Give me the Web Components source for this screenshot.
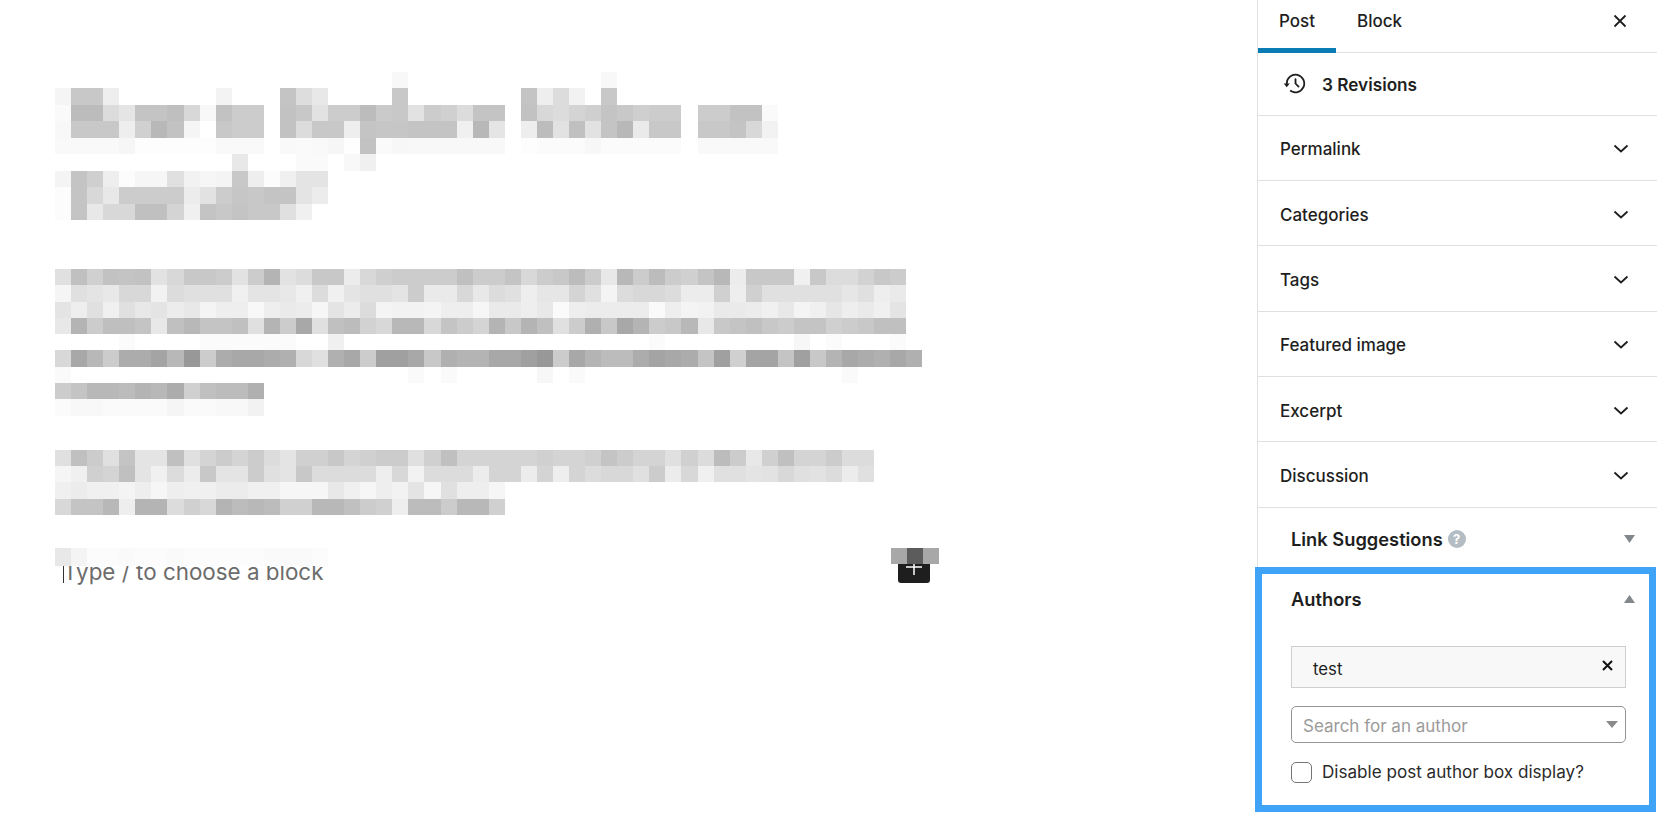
<!DOCTYPE html>
<html>
<head>
<meta charset="utf-8">
<style>
  html, body { margin: 0; padding: 0; background: #fff; height: 100%; overflow: hidden; }
  body { font-family: Inter, "Liberation Sans", sans-serif; color: #1e1e1e; }
</style>
</head>
<body>
<editor-page>
  <editor-canvas slot="canvas">
    <pixel-block id="title" cell-height="16.45" rows="
      ff ff ff ff ff ff ff ff ff ff ff ff ff ff ff ff ff ff ff ff ff f8 ff ff ff ff ff ff ff ff ff ff ff ff f8
      f5 c8 c8 ee ff ff ff ff ff ff f3 ff ff ff c4 dd e8 ff ff ff ff c8 ff ff ff ff ff ff ff c4 ee dc f2 ff c8
      fa bc bc dc e5 c4 c4 bf d8 f8 c2 cc cc ff c2 c8 e2 cc cc bc ca c8 e2 cc d0 dc c4 c4 ff c2 d8 dc d4 cf c4 c8 cf cc cc ff cc cc c2 c2 fa
      f8 c8 c8 c8 ee d0 b8 c2 f5 ff c8 cc cc ff c2 dc c8 c8 ee c4 c6 c6 c4 c4 c4 f0 b8 e5 ff ee bc e2 c0 e2 c4 b8 ea c8 c8 ff c8 c8 c4 d8 f2
      f9 f9 f9 f9 f6 fd fd fd fd fd f9 f9 f9 ff f9 fa f9 f6 fe c2 fa f7 f8 f8 f8 f8 f8 f8 ff fd fb fb fb f7 fb fb fb fb fb ff f9 f9 f9 f9 f9
      ff ff ff ff ff ff ff ff ff ff ff e8 ff ff ff fa fa ff f8 f0
      f4 c4 cf ee fc f6 f6 e0 f2 f6 f4 c8 ee fc f0 e4 e4
      fc c4 d8 e8 cc cc cc cc ec e2 cc c6 c8 c4 c4 e4 ec
      fc c4 e8 d8 d8 c0 c0 d4 f0 c4 c8 c4 c8 c8 e0 f0
    "></pixel-block>
    <pixel-block id="para-one" cell-height="16.3" rows="
      e0 c0 d0 c2 c4 c2 e2 d8 c8 c8 cc e2 cc b4 e2 dc c8 c8 ec d8 cf cc cc cc cc c0 cc cc c4 d8 cc c8 bc cc e8 b8 cc bc cc d0 c4 b8 ec c8 c8 c8 f0 c8 dc dc d2 c8 cc
      f5 e0 e4 e8 d8 d8 f2 dc e0 e0 e0 f0 e4 e4 e8 f0 dc f0 e4 e0 e0 e4 cc ea ea d8 e8 dc e0 ee e6 e6 d4 e0 f4 dc d8 d8 dc ec ec d0 ee d0 e0 e0 e0 e0 e0 e6 e0 ee ea
      e4 ee e0 f0 e0 e8 e4 ec e8 f4 ee ee f8 ee ea ec f6 e4 ec dc f4 f2 f2 f4 ee ee f6 ea ea ee e8 fa ee ec ec ec ec fa ee f4 f2 ea ea ec f0 e8 f4 f0 e6 ee ea f0 e4
      e8 b4 cc bf bf c4 e8 c0 b8 c4 c4 c0 e0 b4 cc a8 e0 c0 bc d2 d8 b8 b8 d8 c4 cc d4 b4 c8 b4 c0 e0 cc b0 c8 a8 b4 cc c8 b8 e8 c8 c4 c0 c8 cc c4 c4 d0 cc c8 c0 c0
      ff ff ff ff fb ff ff ff ff fb fb fb fb fb fb ff ff f0 ff ff ff ff ff ff ff ff ff ff ff ff ff ff ff ff ff ff ff fb ff ff ff ff ff ff ff ff f7 ff fb ff ff ff fb
      d8 a8 b8 cc ac ac a4 b8 98 cc ac a8 a8 ac b0 d8 e0 b0 a8 cc a0 a0 a8 c8 b0 b4 b4 a8 a8 a0 98 cc a8 b4 bc bc ac a4 a8 ac c4 a0 d0 a4 a4 c4 a0 c8 b4 a8 ac b0 a8 b0
      fa ff ff ff ff ff ff ff ff ff ff ff ff ff ff ff ff ff ff ff ff ff fa ff fa ff ff ff ff ff f7 ff fa ff ff ff ff ff ff ff ff ff ff ff ff ff ff ff ff fa
      cc c4 b8 b8 bc b4 b8 ac d0 c0 bc bc b0
      fb f8 f8 fa fa fa fa f5 fa fa f8 f8 f2
    "></pixel-block>
    <pixel-block id="para-two" cell-height="16.4" rows="
      e0 c0 cc e0 c4 e4 e4 c0 e0 d4 cc d4 cc dc e4 d0 d0 c8 d4 d0 cc cc e0 d0 c0 d4 d4 d4 d4 d4 d0 d4 d4 d0 c4 cc d4 d4 e0 d0 dc bc cc e8 d0 c0 d4 d4 cc dc dc
      f5 f0 d0 d4 c0 e4 f0 dc ec c8 e4 e4 cc e0 e4 c8 dc dc dc dc ee d8 f2 dc dc dc ec d4 d4 ec d4 ee d4 dc d8 d8 e0 cc ec d8 f0 e0 e0 e4 e2 d8 e0 e2 dc ec e0
      f0 ec f0 f0 f4 ee f6 ee f0 f0 ec ec f0 f0 f6 f6 f6 e8 f0 f6 ee f2 e4 f6 e0 ee ee f6
      d8 c4 c4 b8 ee b4 b4 dc d0 d8 b4 bc b8 bc d0 d0 b8 b8 c0 cc d0 ee bc bc cc b8 b8 d0
    "></pixel-block>
    <type-line>Type / to choose a block</type-line>
  </editor-canvas>

  <editor-sidebar slot="sidebar">
    <sidebar-tabs></sidebar-tabs>
    <revisions-row>3 Revisions</revisions-row>
    <panel-row>Permalink</panel-row>
    <panel-row>Categories</panel-row>
    <panel-row>Tags</panel-row>
    <panel-row>Featured image</panel-row>
    <panel-row>Excerpt</panel-row>
    <panel-row>Discussion</panel-row>
    <meta-box-header help>Link Suggestions</meta-box-header>
    <authors-box></authors-box>
  </editor-sidebar>
</editor-page>

<script>
class EditorPage extends HTMLElement {
  constructor() {
    super();
    this.attachShadow({ mode: 'open' });
    this.shadowRoot.innerHTML = `
      <style>
        :host { display: flex; width: 1657px; height: 813px; overflow: hidden; background: #fff; }
        .canvas { flex: 0 0 1257px; min-width: 0; }
        .sidebar { flex: 0 0 400px; }
      </style>
      <div class="canvas"><slot name="canvas"></slot></div>
      <div class="sidebar"><slot name="sidebar"></slot></div>`;
  }
}

class EditorCanvas extends HTMLElement {
  constructor() {
    super();
    this.attachShadow({ mode: 'open' });
    this.shadowRoot.innerHTML = `
      <style>
        :host { display: block; padding: 72px 0 0 55px; }
        ::slotted(#para-one) { margin-top: 49px; }
        ::slotted(#para-two) { margin-top: 34px; }
        ::slotted(type-line) { margin-top: 33px; }
      </style>
      <slot></slot>`;
  }
}

// blurred-out text: each row in the attribute is a list of grey levels
class PixelBlock extends HTMLElement {
  constructor() {
    super();
    this.attachShadow({ mode: 'open' });
  }

  connectedCallback() {
    const h = this.getAttribute('cell-height') || '16.4';
    const rows = this.getAttribute('rows').trim().split('\n').map(r => r.trim().split(/\s+/));
    const html = rows.map(row =>
      `<div class="row">${row.map(v => `<i style="background:#${v}${v}${v}"></i>`).join('')}</div>`
    ).join('');
    this.shadowRoot.innerHTML = `
      <style>
        :host { display: block; }
        .row { display: flex; height: ${h}px; }
        i { display: block; flex: 0 0 16.07px; height: 100%; }
      </style>
      ${html}`;
  }
}

class TypeLine extends HTMLElement {
  constructor() {
    super();
    this.attachShadow({ mode: 'open' });
    const greys = ['e8','f4','fc','fc','fa','fc','fc','fa','fc','fc','fc','fc','fc','fa','fa','fa','fc'];
    this.shadowRoot.innerHTML = `
      <style>
        :host { display: flex; position: relative; height: 36px; width: 884px; align-items: flex-start; }
        .text {
          display: flex; flex: 1; align-items: center; height: 36px; padding-left: 8px; padding-top: 10px; box-sizing: border-box;
          font-size: 22.4px; color: #6c6c6c;
        }
        .caret { position: absolute; left: 8px; top: 16px; width: 1px; height: 19px; background: #333; }
        .add {
          display: flex; align-items: center; justify-content: center;
          width: 32px; height: 32px; margin: 3px 9px 0 0; background: #1e1e1e; border-radius: 3px;
        }
        .veil { position: absolute; left: 0; top: 0; display: flex; height: 18px; }
        .veil i { display: block; width: 16.07px; }
        .veil.btn { left: 836px; height: 16px; }
        .veil.btn i { width: 16px; }
      </style>
      <div class="text"><slot></slot></div>
      <div class="caret"></div>
      <div class="add">
        <svg width="16" height="16" viewBox="0 0 16 16"><path d="M8 0v16M0 8h16" stroke="#fff" stroke-width="1.5" fill="none"/></svg>
      </div>
      <div class="veil">${greys.map(v => `<i style="background:#${v}${v}${v}"></i>`).join('')}</div>
      <div class="veil btn"><i style="background:#a8a8a8"></i><i style="background:#5c5c5c"></i><i style="background:#a8a8a8"></i></div>`;
  }
}

class EditorSidebar extends HTMLElement {
  constructor() {
    super();
    this.attachShadow({ mode: 'open' });
    this.shadowRoot.innerHTML = `
      <style>
        :host { display: block; height: 813px; border-left: 1px solid #e0e0e0; box-sizing: border-box; }
      </style>
      <slot></slot>`;
  }
}

class SidebarTabs extends HTMLElement {
  constructor() {
    super();
    this.attachShadow({ mode: 'open' });
    this.shadowRoot.innerHTML = `
      <style>
        :host {
          display: flex; align-items: flex-start; height: 52.5px; box-sizing: border-box;
          border-bottom: 1px solid #e0e0e0; font-size: 17px; font-weight: 500;
        }
        .tab { display: flex; align-items: center; justify-content: center; height: 42px; }
        .post { width: 78px; box-sizing: border-box; border-bottom: 5.5px solid #0a7cb4; height: 52.5px; padding-bottom: 5px; }
        .block { margin-left: 21px; }
        .close { margin-left: auto; margin-right: 30px; height: 42px; display: flex; align-items: center; }
      </style>
      <div class="tab post">Post</div>
      <div class="tab block">Block</div>
      <div class="close">
        <svg width="14" height="14" viewBox="0 0 14 14"><path d="M1.5 1.5l11 11M12.5 1.5l-11 11" stroke="#1e1e1e" stroke-width="1.8" fill="none"/></svg>
      </div>`;
  }
}

class RevisionsRow extends HTMLElement {
  constructor() {
    super();
    this.attachShadow({ mode: 'open' });
    this.shadowRoot.innerHTML = `
      <style>
        :host {
          display: flex; align-items: center; height: 63px; box-sizing: border-box;
          border-bottom: 1px solid #e0e0e0; padding-left: 23px; font-size: 17.2px; font-weight: 600;
        }
        svg { margin-right: 12px; }
        span { padding-top: 1px; }
      </style>
      <svg width="29" height="29" viewBox="0 0 24 24" fill="#1e1e1e"><path d="M5.5 12h1.75l-2.5 3-2.5-3H4a8 8 0 113.134 6.35l.907-1.194A6.5 6.5 0 105.5 12zm9.53 1.97l-2.28-2.28V8.5a.75.75 0 00-1.5 0V12.3l2.72 2.72a.75.75 0 001.06-1.06z"/></svg>
      <span><slot></slot></span>`;
  }
}

class PanelRow extends HTMLElement {
  constructor() {
    super();
    this.attachShadow({ mode: 'open' });
    this.shadowRoot.innerHTML = `
      <style>
        :host {
          display: flex; align-items: center; justify-content: space-between; height: 65.4px; box-sizing: border-box;
          border-bottom: 1px solid #e0e0e0; padding: 3px 28px 0 22px; font-size: 17px; font-weight: 500;
        }
      </style>
      <span><slot></slot></span>
      <svg width="16" height="10" viewBox="0 0 16 10"><path d="M1.5 1.5L8 7.5l6.5-6" stroke="#1e1e1e" stroke-width="1.8" fill="none"/></svg>`;
  }
}

class MetaBoxHeader extends HTMLElement {
  constructor() {
    super();
    this.attachShadow({ mode: 'open' });
    const help = this.hasAttribute('help') ? `<span class="help">?</span>` : '';
    const up = this.hasAttribute('open');
    this.shadowRoot.innerHTML = `
      <style>
        :host {
          display: flex; align-items: center; box-sizing: border-box; height: var(--row-height, 59px);
          padding: var(--row-top, 4px) 22px 0 33px; font-size: 18.3px; font-weight: 600;
        }
        .help {
          width: 18px; height: 18px; margin-left: 5px; border-radius: 50%; background: #b4bcc4; color: #fff;
          font-size: 13px; font-weight: 700; display: flex; align-items: center; justify-content: center;
        }
        svg { margin-left: auto; transform: ${up ? 'rotate(180deg)' : 'none'}; }
      </style>
      <slot></slot>${help}
      <svg width="11" height="8" viewBox="0 0 11 8"><path d="M0 0h11L5.5 8z" fill="#82878c"/></svg>`;
  }
}

class AuthorsBox extends HTMLElement {
  constructor() {
    super();
    this.attachShadow({ mode: 'open' });
    this.shadowRoot.innerHTML = `
      <style>
        :host {
          display: block; box-sizing: border-box; height: 245.5px; margin: 0 1px 0 -3px;
          border: 7px solid #3fa4f8; background: #fff;
        }
        meta-box-header { --row-height: 51px; --row-top: 0px; padding-left: 29px; padding-right: 14px; }
        .body { display: flex; flex-direction: column; padding: 21px 23px 0 29px; font-size: 17px; }
        .chosen {
          display: flex; justify-content: space-between; box-sizing: border-box; height: 42px;
          padding: 0 12px 0 21px; align-items: center; background: #f8f8f8; border: 1px solid #cfcfcf;
          font-size: 16.8px;
        }
        .chosen span { padding-top: 4px; }
        .chosen svg { margin-top: -2px; }
        .search {
          display: flex; justify-content: space-between; align-items: center; box-sizing: border-box; height: 37px;
          margin-top: 18px; padding: 0 7px 0 11px; border: 1px solid #949494; border-radius: 5px;
          color: #9b9b9b; font-size: 17px;
        }
        .search span { padding-top: 3px; }
        .disable { display: flex; align-items: center; margin-top: 19px; font-size: 17.1px; color: #2a2a2a; }
        .disable span { margin-top: -2px; }
        .box {
          width: 21px; height: 21px; box-sizing: border-box; border: 1.5px solid #757575; border-radius: 5px;
          margin-right: 10px; background: #fff;
        }
      </style>
      <meta-box-header open>Authors</meta-box-header>
      <div class="body">
        <div class="chosen">
          <span>test</span>
          <svg width="11" height="11" viewBox="0 0 11 11"><path d="M1 1l9 9M10 1l-9 9" stroke="#111" stroke-width="2" fill="none"/></svg>
        </div>
        <div class="search">
          <span>Search for an author</span>
          <svg width="12" height="7" viewBox="0 0 12 7"><path d="M0 0h12L6 7z" fill="#8a8a8a"/></svg>
        </div>
        <div class="disable"><div class="box"></div><span>Disable post author box display?</span></div>
      </div>`;
  }
}

customElements.define('editor-page', EditorPage);
customElements.define('editor-canvas', EditorCanvas);
customElements.define('pixel-block', PixelBlock);
customElements.define('type-line', TypeLine);
customElements.define('editor-sidebar', EditorSidebar);
customElements.define('sidebar-tabs', SidebarTabs);
customElements.define('revisions-row', RevisionsRow);
customElements.define('panel-row', PanelRow);
customElements.define('meta-box-header', MetaBoxHeader);
customElements.define('authors-box', AuthorsBox);
</script>
</body>
</html>
